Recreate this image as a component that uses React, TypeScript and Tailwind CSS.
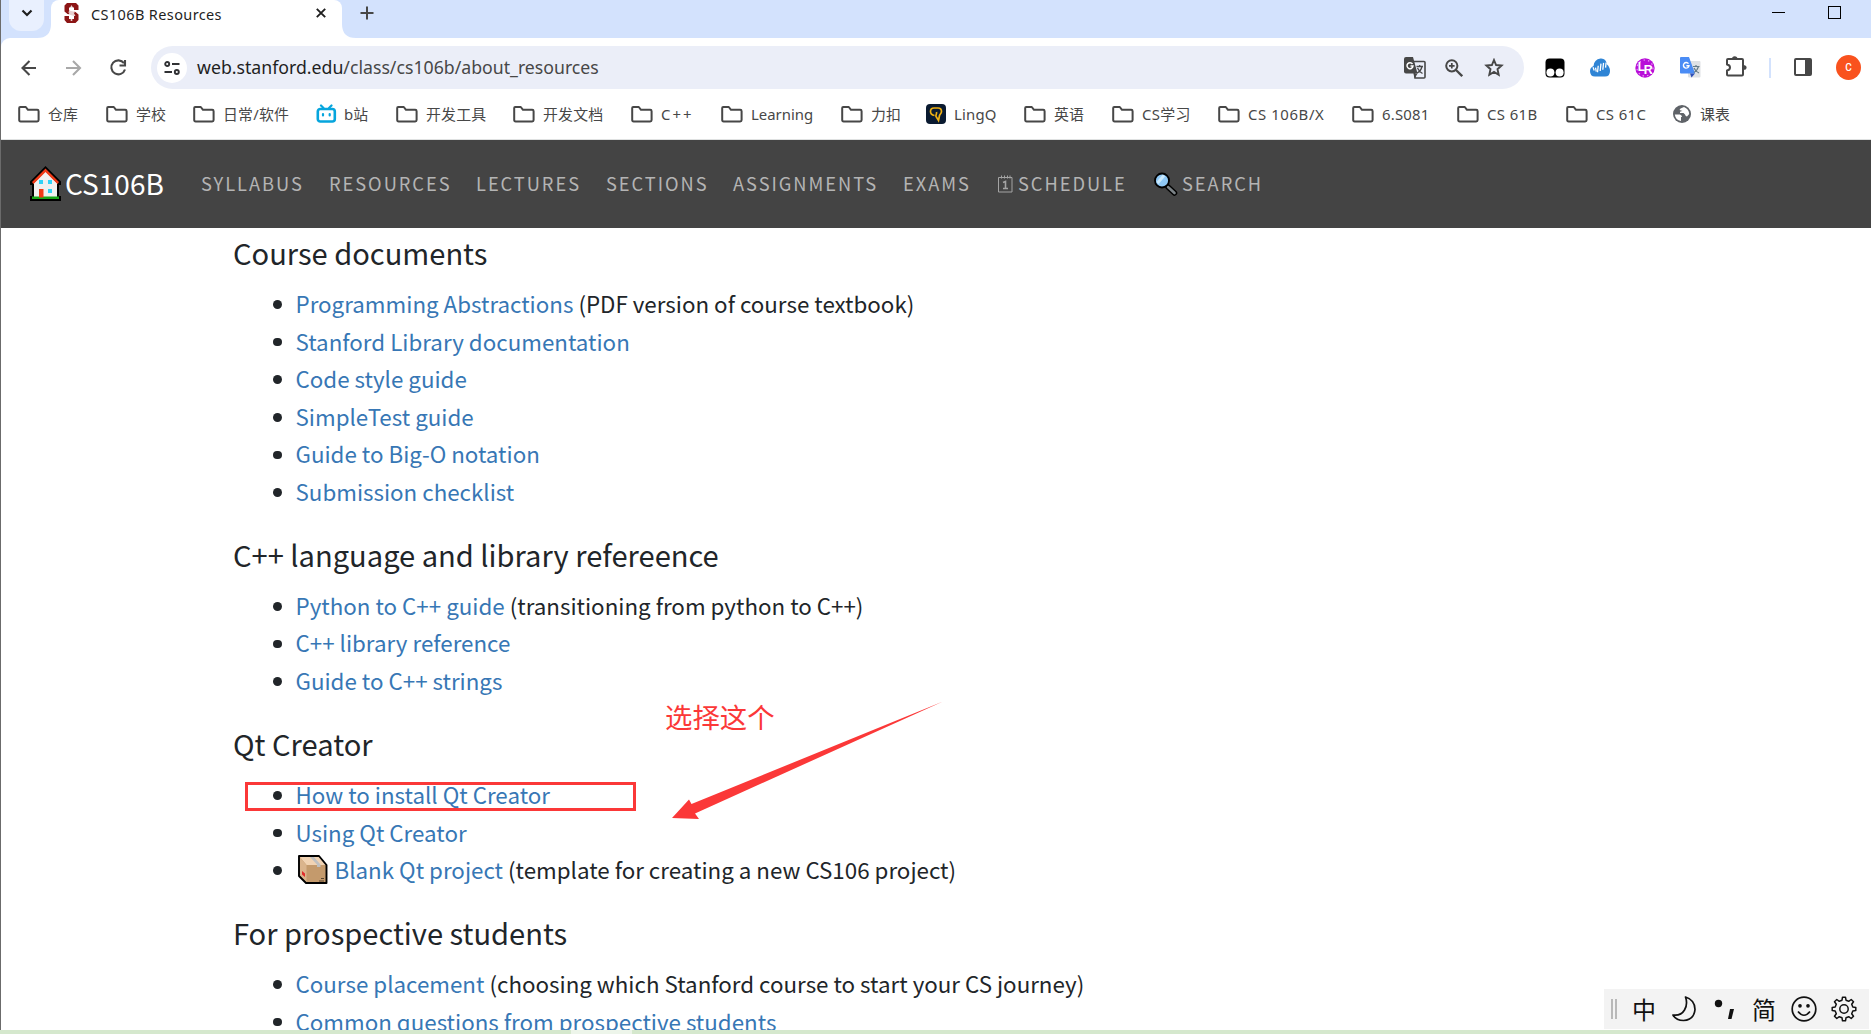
import type { ReactNode } from 'react'

const Folder = () => (
  <svg width="22" height="17" viewBox="0 0 22 17" fill="none" stroke="#474747" strokeWidth="2" strokeLinejoin="round">
    <path d="M1.200 3V2q0-1 1-1h5.600l2.200 2.800h9.200q1.400 0 1.400 1.400v8.800q0 1.400-1.400 1.400H2.600q-1.400 0-1.400-1.400z" />
  </svg>
)
const Bili = () => (
  <svg width="22" height="20" viewBox="0 0 22 20" fill="none" stroke="#06a5dd" strokeWidth="2.6" strokeLinecap="round">
    <rect x="1.800" y="5" width="17" height="12.500" rx="2.500" />
    <path d="M5 1.500 7.500 4M15.500 1.500 13 4M7 10v1.500M13.700 10v1.500" strokeWidth="2.2" />
  </svg>
)
const LingQ = () => (
  <svg width="20" height="20" viewBox="0 0 20 20" fill="none">
    <rect width="20" height="20" rx="4" fill="#0a1a30" />
    <path d="M8.500 11.500C5.500 11 4.500 9.500 4.500 7.500 4.500 5 6 4 8 4h4C14.500 4 15.500 5.500 15.500 7.500c0 2-1.500 2.500-2 4L12.500 16.500 10 12.500c-.5-2 1-2 .5-4.500" stroke="#eeb014" strokeWidth="1.700" />
  </svg>
)
const Globe = () => (
  <svg width="18" height="18" viewBox="0 0 18 18">
    <circle cx="9" cy="9" r="9" fill="#5f6368" />
    <path d="M1.800 9.500H7q2 .5 2 2.500h-1v4q-5.500-1-6.200-6.500zM6.500 5 7.500 3.500 11 2q5 2 5.200 7l-2.200 2.500q-1.500 0-2-2L10.500 8H7q-.5-2 2.500-2z" fill="#fff" />
  </svg>
)

const bookmarks: { w: string; icon: ReactNode; text: string; tail: string }[] = [
  { w: 'w-[88px]', icon: <Folder />, text: '仓库', tail: 'ml-[8px] tracking-[0.200px]' },
  { w: 'w-[87px]', icon: <Folder />, text: '学校', tail: 'ml-[8px] tracking-[0.200px]' },
  { w: 'w-[123px]', icon: <Folder />, text: '日常/软件', tail: 'ml-[8px] tracking-[0.200px]' },
  { w: 'w-[80px]', icon: <Bili />, text: 'b站', tail: 'ml-[6px] tracking-[0.200px]' },
  { w: 'w-[117px]', icon: <Folder />, text: '开发工具', tail: 'ml-[8px] tracking-[0.200px]' },
  { w: 'w-[118px]', icon: <Folder />, text: '开发文档', tail: 'ml-[8px] tracking-[0.200px]' },
  { w: 'w-[90px]', icon: <Folder />, text: 'C++', tail: 'ml-[8px] tracking-[2px]' },
  { w: 'w-[120px]', icon: <Folder />, text: 'Learning', tail: 'ml-[8px]' },
  { w: 'w-[85px]', icon: <Folder />, text: '力扣', tail: 'ml-[8px] tracking-[0.200px]' },
  { w: 'w-[98px]', icon: <LingQ />, text: 'LingQ', tail: 'ml-[8px] tracking-[0.200px]' },
  { w: 'w-[88px]', icon: <Folder />, text: '英语', tail: 'ml-[8px] tracking-[0.200px]' },
  { w: 'w-[106px]', icon: <Folder />, text: 'CS学习', tail: 'ml-[8px] tracking-[0.300px]' },
  { w: 'w-[134px]', icon: <Folder />, text: 'CS 106B/X', tail: 'ml-[8px] tracking-[0.600px]' },
  { w: 'w-[105px]', icon: <Folder />, text: '6.S081', tail: 'ml-[8px] tracking-[0.200px]' },
  { w: 'w-[109px]', icon: <Folder />, text: 'CS 61B', tail: 'ml-[8px] tracking-[0.400px]' },
  { w: 'w-[107px]', icon: <Folder />, text: 'CS 61C', tail: 'ml-[8px] tracking-[0.400px]' },
  { w: 'w-[80px]', icon: <Globe />, text: '课表', tail: 'ml-[9px]' },
]

const House = () => (
  <svg width="31" height="35" viewBox="0 0 31 35" className="mb-[2px] shrink-0">
    <path d="M15.500 0 31 15.500V19h-2v11h2v5H0v-5h2V19H0v-3.500z" fill="#000" />
    <path d="M15.500 5 27 17v14H4V17z" fill="#f0f0f0" />
    <path d="M15.500 2.500 29 16l-1.500 2-12-12L3.500 18 2 16z" fill="#f03a17" />
    <path d="M2 30.500h27V33H2z" fill="#16a716" />
    <path d="M9 14h4v4H9zM18 14h4v4h-4zM18 23h4v4h-4z" fill="#31d2f7" />
    <path d="M9 23h4.500v8.500H9z" fill="#f03a17" />
  </svg>
)
const Calendar = () => (
  <svg width="15" height="18" viewBox="0 0 15 18" fill="none" stroke="#a4a4a4" strokeWidth="1" className="ml-[1px] shrink-0">
    <path d="M.5 2.500h13.500v14.500H.5zM3.500.5v3M6.500.5v3M9.500.5v3M12 .5v3" />
    <path d="M5 7.500 7.500 6.500v7M5 13.500h5" strokeWidth="1.600" />
  </svg>
)
const Magnifier = () => (
  <svg width="24" height="24" viewBox="0 0 24 24" className="shrink-0">
    <path d="m14 15 6.500 6" stroke="#000" strokeWidth="5.500" strokeLinecap="round" />
    <path d="m14 15 6.500 6" stroke="#7c8387" strokeWidth="2.600" strokeLinecap="round" />
    <circle cx="8" cy="8.500" r="7" fill="#8fc8f5" stroke="#000" strokeWidth="1.800" />
    <path d="M3.500 11 10 3.500" stroke="#c9e9fc" strokeWidth="3" />
  </svg>
)
const Box = () => (
  <svg width="30" height="29" viewBox="0 0 30 29" strokeLinejoin="round" className="ml-[2px] mr-[7px]">
    <path d="M1 1h20l7.500 9v18H8L1 21z" fill="#c49a6c" />
    <path d="M1 1h20l7.500 9H8.500z" fill="#f1d3b3" />
    <path d="M1 1l7.500 9v18L1 21z" fill="#dab48c" />
    <path d="m11 1 8 8.500V12h3.500V9.500L15 1z" fill="#c0c0c0" />
    <path d="m4 16 3 2.500v3.500l-3-2.500z" fill="#e12b2b" />
    <path d="M21 26h5M23 23.500h3" stroke="#59442e" />
    <path d="M1 1h20l7.500 9v18H8L1 21z" fill="none" stroke="#000" strokeWidth="1.900" />
  </svg>
)

const nav = [
  { w: 'w-[128px]', text: 'SYLLABUS' },
  { w: 'w-[147px]', text: 'RESOURCES' },
  { w: 'w-[130px]', text: 'LECTURES' },
  { w: 'w-[127px]', text: 'SECTIONS' },
  { w: 'w-[170px]', text: 'ASSIGNMENTS' },
  { w: 'w-[94px]', text: 'EXAMS' },
]

const sections: { title: string; items: { link: string; note?: string; box?: boolean }[] }[] = [
  {
    title: 'Course documents',
    items: [
      { link: 'Programming Abstractions', note: '(PDF version of course textbook)' },
      { link: 'Stanford Library documentation' },
      { link: 'Code style guide' },
      { link: 'SimpleTest guide' },
      { link: 'Guide to Big-O notation' },
      { link: 'Submission checklist' },
    ],
  },
  {
    title: 'C++ language and library refereence',
    items: [
      { link: 'Python to C++ guide', note: '(transitioning from python to C++)' },
      { link: 'C++ library reference' },
      { link: 'Guide to C++ strings' },
    ],
  },
  {
    title: 'Qt Creator',
    items: [
      { link: 'How to install Qt Creator' },
      { link: 'Using Qt Creator' },
      { link: 'Blank Qt project', note: '(template for creating a new CS106 project)', box: true },
    ],
  },
  {
    title: 'For prospective students',
    items: [
      { link: 'Course placement', note: '(choosing which Stanford course to start your CS journey)' },
      { link: 'Common questions from prospective students' },
    ],
  },
]

function TabStrip() {
  return (
    <div className="flex h-[38px] shrink-0 bg-[#d3e2fd]">
      <div className="ml-[8px] flex h-[31px] w-[35px] shrink-0 justify-center rounded-b-[12px] bg-[#e9f0fe]">
        <svg width="12" height="9" viewBox="0 0 12 9" className="mt-[9px]" fill="none" stroke="#1f1f1f" strokeWidth="2.200">
          <path d="m1.500 1.500 4.500 4.500 4.500-4.500" />
        </svg>
      </div>
      <svg width="14" height="38" className="-ml-[7px] shrink-0"><path d="M14 24Q14 38 0 38h14z" fill="#fff" /></svg>
      <div className="flex h-[38px] w-[291px] shrink-0 rounded-t-[8px] bg-white">
        <svg width="15" height="20" viewBox="0 0 15 20" className="ml-[13px] mt-[3px] shrink-0">
          <path d="M3 0h9L14.500 2.500V7H10V4.500H5v3l6.500 1.500 3 2.500V17l-3 3H3l-2.500-3v-4H5v3h5v-3L3.500 11 .5 8.500V2.500z" fill="#8c1515" />
          <path d="m7.500 2 2.300 4-1 .3L11 9.500l-1.300.3L11.500 13H8.300v5H6.700v-5H3.500l2-3.200L4.200 9.500l2.100-3.200-1-.3z" fill="#fff" opacity=".8" />
        </svg>
        <div className="ml-[12px] w-[225px] whitespace-nowrap font-['Noto_Sans',sans-serif] text-[14.500px] leading-[29px] tracking-[0.380px] text-[#1f1f1f]">CS106B Resources</div>
        <svg width="10" height="10" viewBox="0 0 10 10" className="mt-[8px] shrink-0" stroke="#1f1f1f" strokeWidth="1.900"><path d="m.8.800 8.400 8.400M9.200.8.800 9.200" /></svg>
      </div>
      <svg width="14" height="38" className="shrink-0"><path d="M0 24Q0 38 14 38H0z" fill="#fff" /></svg>
      <svg width="14" height="14" viewBox="0 0 14 14" className="ml-[4px] mt-[6px] shrink-0" stroke="#474747" strokeWidth="2"><path d="M7 .5v13M.5 7h13" /></svg>
      <div className="ml-auto flex shrink-0 pr-[29px]">
        <svg width="14" height="13" className="mr-[42px] mt-[6px]"><path d="M0 6.500h13" stroke="#000" /></svg>
        <svg width="14" height="14" className="mt-[6px]"><rect x=".5" y=".5" width="12" height="12" fill="none" stroke="#000" /></svg>
      </div>
    </div>
  )
}

const PageTranslate = () => (
  <svg width="22" height="22" viewBox="0 0 22 22" className="shrink-0">
    <path d="M9 4.500h11q1 0 1 1V20q0 1-1 1H11z" fill="none" stroke="#474747" strokeWidth="1.600" />
    <path d="M2 0h7l4.500 16.500H2q-2 0-2-2V2q0-2 2-2z" fill="#474747" />
    <path d="m9.500 16.500 4 0-2.500 4.500z" fill="#474747" />
    <path d="M8.500 7A3 3 0 1 0 9 9H6.500" fill="none" stroke="#fff" strokeWidth="1.500" />
    <path d="M12.500 9.500H19M15.700 8v1.500M18 9.500q-1 4.500-5 6.500M13.500 11q1.500 3.500 5 5.500" fill="none" stroke="#474747" strokeWidth="1.300" />
  </svg>
)
const ZoomIn = () => (
  <svg width="18" height="18" viewBox="0 0 18 18" className="shrink-0" fill="none" stroke="#474747">
    <circle cx="6.800" cy="6.800" r="5.600" strokeWidth="2" />
    <path d="m11 11 6.200 6.200" strokeWidth="2.300" /><path d="M6.800 4v5.600M4 6.800h5.600" strokeWidth="1.700" />
  </svg>
)
const Star = () => (
  <svg width="20" height="19" viewBox="0 0 20 19" className="shrink-0" fill="none" stroke="#474747" strokeWidth="1.900">
    <path d="M10 2 12.100 7 17.600 7.500 13.500 11.200 14.700 16.700 10 13.900 5.300 16.700 6.500 11.200 2.400 7.500 7.900 7z" />
  </svg>
)
const Tamper = () => (
  <svg width="20" height="20" viewBox="0 0 20 20" className="shrink-0">
    <rect x=".5" y=".5" width="19" height="19" rx="4" fill="#000" />
    <circle cx="5.400" cy="14.500" r="4" fill="#fff" /><circle cx="14.600" cy="14.500" r="4" fill="#fff" />
  </svg>
)
const Cloud = () => (
  <svg width="20" height="19" viewBox="0 0 20 19" className="shrink-0">
    <path d="M5 18.500q-5 0-5-5.500 0-3.500 3.500-5Q4 1.500 10.500.5 16 0 17 6.500q3 2.500 3 6.500 0 5.500-5 5.500z" fill="#2e84d5" />
    <path d="m3 10 1.500 3M5.500 10l1.200 4M8 8l0 6.500M10.500 5.500V13M13 4.500v7M15.500 4v5" stroke="#fff" strokeWidth="1.300" transform="rotate(6 10 10)" />
  </svg>
)
const LR = () => (
  <svg width="20" height="20" viewBox="0 0 20 20" className="shrink-0">
    <circle cx="10" cy="10" r="9.700" fill="#b80ed8" />
    <circle cx="10" cy="10" r="8" fill="none" stroke="#e79af3" strokeWidth="1.200" strokeDasharray="1.500 3" />
    <text x="2.800" y="12.500" fontSize="12" fontWeight="700" fill="#fff" fontFamily="Liberation Sans">L</text>
    <text x="8.800" y="15.800" fontSize="12.500" fontWeight="700" fill="#fff" fontFamily="Liberation Sans">R</text>
  </svg>
)
const GTranslate = () => (
  <svg width="21" height="21" viewBox="0 0 21 21" className="shrink-0">
    <rect x="8" y="4" width="12.500" height="16.500" rx="1" fill="#dfe2e5" />
    <path d="M1 0h8l6 16.500H1q-1 0-1-1V1q0-1 1-1z" fill="#4a8cf5" />
    <path d="M10 16.500h5L11.500 20.500z" fill="#2f50b8" />
    <path d="M8.500 6.700A2.800 2.800 0 1 0 9 8.700H6.400" fill="none" stroke="#fff" strokeWidth="1.400" />
    <path d="M13 9.500h6.500M16 8v1.500M18.500 9.500q-1 4-4.500 6M14 11q1.500 3.500 5 5" fill="none" stroke="#657c89" strokeWidth="1.200" />
  </svg>
)
const Puzzle = () => (
  <svg width="22" height="21" viewBox="0 0 22 21" className="-mt-[2px] shrink-0">
    <path d="M1 4q0-1 1-1h14q1 0 1 1v14.500q0 1-1 1H2q-1 0-1-1V14.500q3-.5 3-3t-3-3z" fill="none" stroke="#474747" strokeWidth="2" strokeLinejoin="round" />
    <path d="M6 3Q6 .2 8.700.2T11.500 3zM17 9q3.600 0 3.600 2.500T17 14z" fill="#474747" />
  </svg>
)

function Toolbar() {
  return (
    <div className="bg-[#d3e2fd]">
      <div className="flex h-[59px] shrink-0 items-center rounded-tl-[9px] bg-white">
        <svg width="131" height="24" viewBox="0 0 131 24" className="ml-[19px] shrink-0" fill="none" strokeWidth="2.100">
          <path d="M16 12H2.500m7-7-7 7 7 7" stroke="#474747" />
          <path d="M46 12h14m-7-7 7 7-7 7" stroke="#a8a8a8" />
          <path d="M104 7.200A7 7 0 1 0 105 13.500M105 4v5.500H99.500" stroke="#474747" />
        </svg>
        <div className="flex h-[43px] w-[1373px] shrink-0 items-center rounded-full bg-[#ebeef8] pr-[20px]">
          <div className="ml-[6px] flex size-[30px] items-center justify-center rounded-full bg-white">
            <svg width="16" height="14" viewBox="0 0 16 14" fill="none" stroke="#303134" strokeWidth="1.900">
              <circle cx="3.200" cy="3" r="2" /><path d="M8 3h7.500M.5 11H8" /><circle cx="12.800" cy="11" r="2" />
            </svg>
          </div>
          <div className="ml-[10px] mr-auto whitespace-nowrap font-['Noto_Sans',sans-serif] text-[17.700px] text-[#474747]"><span className="text-[#1f1f1f]">web.stanford.edu</span>/class/cs106b/about_resources</div>
          <PageTranslate />
          <div className="w-[19px]" />
          <ZoomIn />
          <div className="w-[21px]" />
          <Star />
        </div>
        <div className="ml-auto flex items-center gap-[25px] pr-[10px]">
          <Tamper /><Cloud /><LR /><GTranslate /><Puzzle />
          <div className="-ml-[4px] h-[20px] w-[2px] bg-[#d3e2fd]" />
          <svg width="18" height="18" viewBox="0 0 18 18" className="-ml-[2px] -mt-[1px]"><rect x="1" y="1" width="16" height="16" rx="1" fill="none" stroke="#474747" strokeWidth="2" /><path d="M11 1h6v16h-6z" fill="#474747" /></svg>
          <div className="-ml-[1px] flex size-[25px] items-center justify-center rounded-full bg-[#f9521e] font-['Roboto',sans-serif] text-[10px] font-medium text-white">C</div>
        </div>
      </div>
    </div>
  )
}

const InputMethodBar = () => (
  <div className="absolute left-[1603px] top-[989px] flex h-[40px] w-[265px] items-center bg-[#f3f3f3] pl-[7px] font-['Noto_Sans_CJK_SC',sans-serif] text-[24px] text-[#111]">
    <div className="h-[20px] w-[6px] shrink-0 border-x-2 border-[#b9b9b9]" />
    <div className="ml-[15px] w-[40px] leading-[40px]">中</div>
    <svg width="24" height="26" viewBox="0 0 24 26" fill="none" stroke="#111" strokeWidth="1.700" strokeLinejoin="round"><path d="M13.500 1Q23 4 23 13.500 22 24 11.500 24.500 4 24.500 1 19q8 1 11.500-5 3.500-6 1-13z" /></svg>
    <svg width="20" height="24" viewBox="0 0 20 24" className="ml-[18px]"><circle cx="4.500" cy="6.500" r="3.700" fill="#111" /><path d="M16 12h4l-2.500 10H14z" fill="#111" /></svg>
    <div className="ml-[18px] w-[39px] leading-[40px]">简</div>
    <svg width="26" height="26" viewBox="0 0 26 26" fill="none" stroke="#111" strokeWidth="1.700"><circle cx="13" cy="13" r="11.800" /><path d="M7 15.500q6 7.500 12 0" /><circle cx="9" cy="9.800" r="1" fill="#111" /><circle cx="17" cy="9.800" r="1" fill="#111" /></svg>
    <svg width="26" height="26" viewBox="0 0 26 26" className="ml-[14px]" fill="none" stroke="#111" strokeWidth="1.500" strokeLinejoin="round">
      <path d="M11 4.200 11.500 1.200h3L15 4.200l2.700 1.100L20.200 3.500l2.300 2.300-1.800 2.500L21.800 11l3 .5v3l-3 .5-1.100 2.700 1.800 2.500-2.300 2.300-2.500-1.800-2.700 1.100-.5 3h-3l-.5-3-2.700-1.100-2.500 1.800-2.300-2.300 1.800-2.500L4.200 15l-3-.5v-3l3-.5 1.100-2.700L3.500 5.800 5.800 3.500l2.500 1.800z" />
      <circle cx="13" cy="13" r="4.200" />
    </svg>
  </div>
)

const Annotations = () => (
  <>
    <div className="absolute left-[244px] top-[782px] h-[29px] w-[391px] border-3 border-[#fb3838]" />
    <div className="absolute left-[664px] top-[696px] whitespace-nowrap font-['Noto_Sans_CJK_SC',sans-serif] text-[27.400px] leading-[40px] text-[#fb3838]">选择这个</div>
    <svg width="274" height="122" viewBox="0 0 274 122" className="absolute left-[670px] top-[700px]">
      <path d="M1 118 18 99.500l2.500 4.500L272 1.500 24 113.500l4 5.500z" fill="#fb3838" />
    </svg>
  </>
)

export default function App() {
  return (
    <div className="flex h-[1034px] w-[1871px] flex-col overflow-hidden bg-white">
      <div className="relative flex h-[1030px] shrink-0 flex-col overflow-hidden border-l border-[#6b6b6b]">
        <TabStrip />
        <Toolbar />
        <div className="flex h-[43px] shrink-0 border-b border-[#dfe1e1] pl-[17px] font-['Noto_Sans','Noto_Sans_CJK_SC',sans-serif] text-[14.900px] text-[#474747]">
          {bookmarks.map((b) => (
            <div key={b.text} className={'flex h-[34px] shrink-0 items-center whitespace-nowrap ' + b.w}>
              {b.icon}
              <span className={b.tail}>{b.text}</span>
            </div>
          ))}
        </div>
        <header className="flex h-[88px] shrink-0 items-center bg-[#444] pl-[29px] font-['Noto_Sans_CJK_SC',sans-serif] text-[18.300px] tracking-[1.950px] text-[#b4b4b4]">
          <House />
          <div className="ml-[4px] w-[136px] shrink-0 pb-[3px] text-[28px] tracking-normal text-white">CS106B</div>
          {nav.map((n) => <div key={n.text} className={'shrink-0 ' + n.w}>{n.text}</div>)}
          <Calendar />
          <div className="ml-[5px] w-[136px] shrink-0">SCHEDULE</div>
          <Magnifier />
          <div className="ml-[4px]">SEARCH</div>
        </header>
        <main className="pl-[232px] font-['Noto_Sans_CJK_SC',sans-serif] text-[#212529]">
          {sections.map((s) => (
            <section key={s.title} className="mb-[19.300px]">
              <h2 className="mb-[8px] text-[29.080px] leading-[49px]">{s.title}</h2>
              <ul className="pl-[40px] text-[22.350px]">
                {s.items.map((i) => (
                  <li key={i.link} className="flex h-[37.600px] items-center whitespace-nowrap">
                    <span className="mr-[14px] mt-[1.500px] size-[8.500px] shrink-0 rounded-full bg-[#212529]" />
                    {i.box && <Box />}
                    <a className="text-[#3777b5]">{i.link}</a>&nbsp;{i.note}
                  </li>
                ))}
              </ul>
            </section>
          ))}
        </main>
        <Annotations />
        <InputMethodBar />
      </div>
      <div className="flex h-[4px] shrink-0 bg-[#d5e8cd] pl-[571px]">
        <div className="w-[61px] bg-[#edf5ea]" />
      </div>
    </div>
  )
}
